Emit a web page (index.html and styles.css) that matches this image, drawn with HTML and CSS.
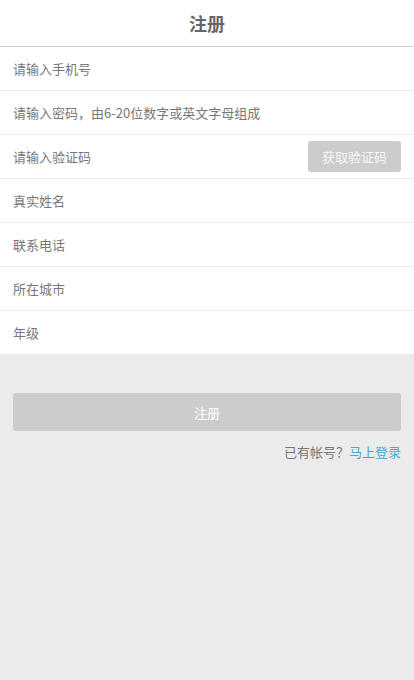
FILE: index.html
```html
<!DOCTYPE html>
<html lang="zh-CN">
<head>
<meta charset="utf-8">
<meta name="viewport" content="width=device-width, initial-scale=1">
<title>注册</title>
<link rel="stylesheet" href="styles.css">
</head>
<body>
<header class="topbar"><h1 class="title">注册</h1></header>
<form class="form">
  <div class="list">
    <div class="row"><input class="field" type="tel" placeholder="请输入手机号"></div>
    <div class="row"><input class="field" type="password" placeholder="请输入密码，由6-20位数字或英文字母组成"></div>
    <div class="row"><input class="field" type="text" placeholder="请输入验证码"><button type="button" class="code-btn">获取验证码</button></div>
    <div class="row"><input class="field" type="text" placeholder="真实姓名"></div>
    <div class="row"><input class="field" type="tel" placeholder="联系电话"></div>
    <div class="row"><input class="field" type="text" placeholder="所在城市"></div>
    <div class="row"><input class="field" type="text" placeholder="年级"></div>
  </div>
  <div class="actions">
    <button type="button" class="submit">注册</button>
    <p class="login">已有帐号？<a class="login-link" href="#">马上登录</a></p>
  </div>
</form>
</body>
</html>
```
FILE: styles.css
```css
* { box-sizing: border-box; }
html, body { margin: 0; padding: 0; }
body {
  background: #ebebeb;
  font-family: "Noto Sans CJK SC", "Noto Sans", "Liberation Sans", sans-serif;
  font-size: 13px;
  color: #666;
}
.topbar {
  height: 47px;
  background: #fff;
  border-bottom: 1px solid #cfcfcf;
  display: flex;
  align-items: center;
  justify-content: center;
}
.title {
  margin: 0;
  font-size: 18px;
  font-weight: bold;
  color: #666;
  line-height: 45px;
}
.form { margin: 0; }
.list { background: #fff; }
.row {
  height: 44px;
  border-bottom: 1px solid #ececec;
  display: flex;
  align-items: center;
  padding: 0 13px;
}
.row:last-child { border-bottom: none; height: 43px; }
.field {
  flex: 1;
  min-width: 0;
  border: none;
  outline: none;
  background: transparent;
  padding: 0;
  font-family: inherit;
  font-size: 13px;
  color: #555;
  height: 30px;
}
.field::placeholder { color: #777; }
.code-btn {
  width: 93px;
  height: 31px;
  border: none;
  border-radius: 3px;
  background: #cccccc;
  color: #f7f7f7;
  font-family: inherit;
  font-size: 13px;
  padding: 0;
}
.actions { padding: 39px 13px 0; }
.submit {
  display: block;
  width: 100%;
  height: 38px;
  border: none;
  border-radius: 3px;
  background: #cccccc;
  color: #fff;
  font-family: inherit;
  font-size: 13px;
  padding: 0;
}
.login {
  margin: 11px 0 0;
  text-align: right;
  line-height: 20px;
  color: #777;
  font-size: 13px;
}
.login-link { color: #40acd9; text-decoration: none; }
```
